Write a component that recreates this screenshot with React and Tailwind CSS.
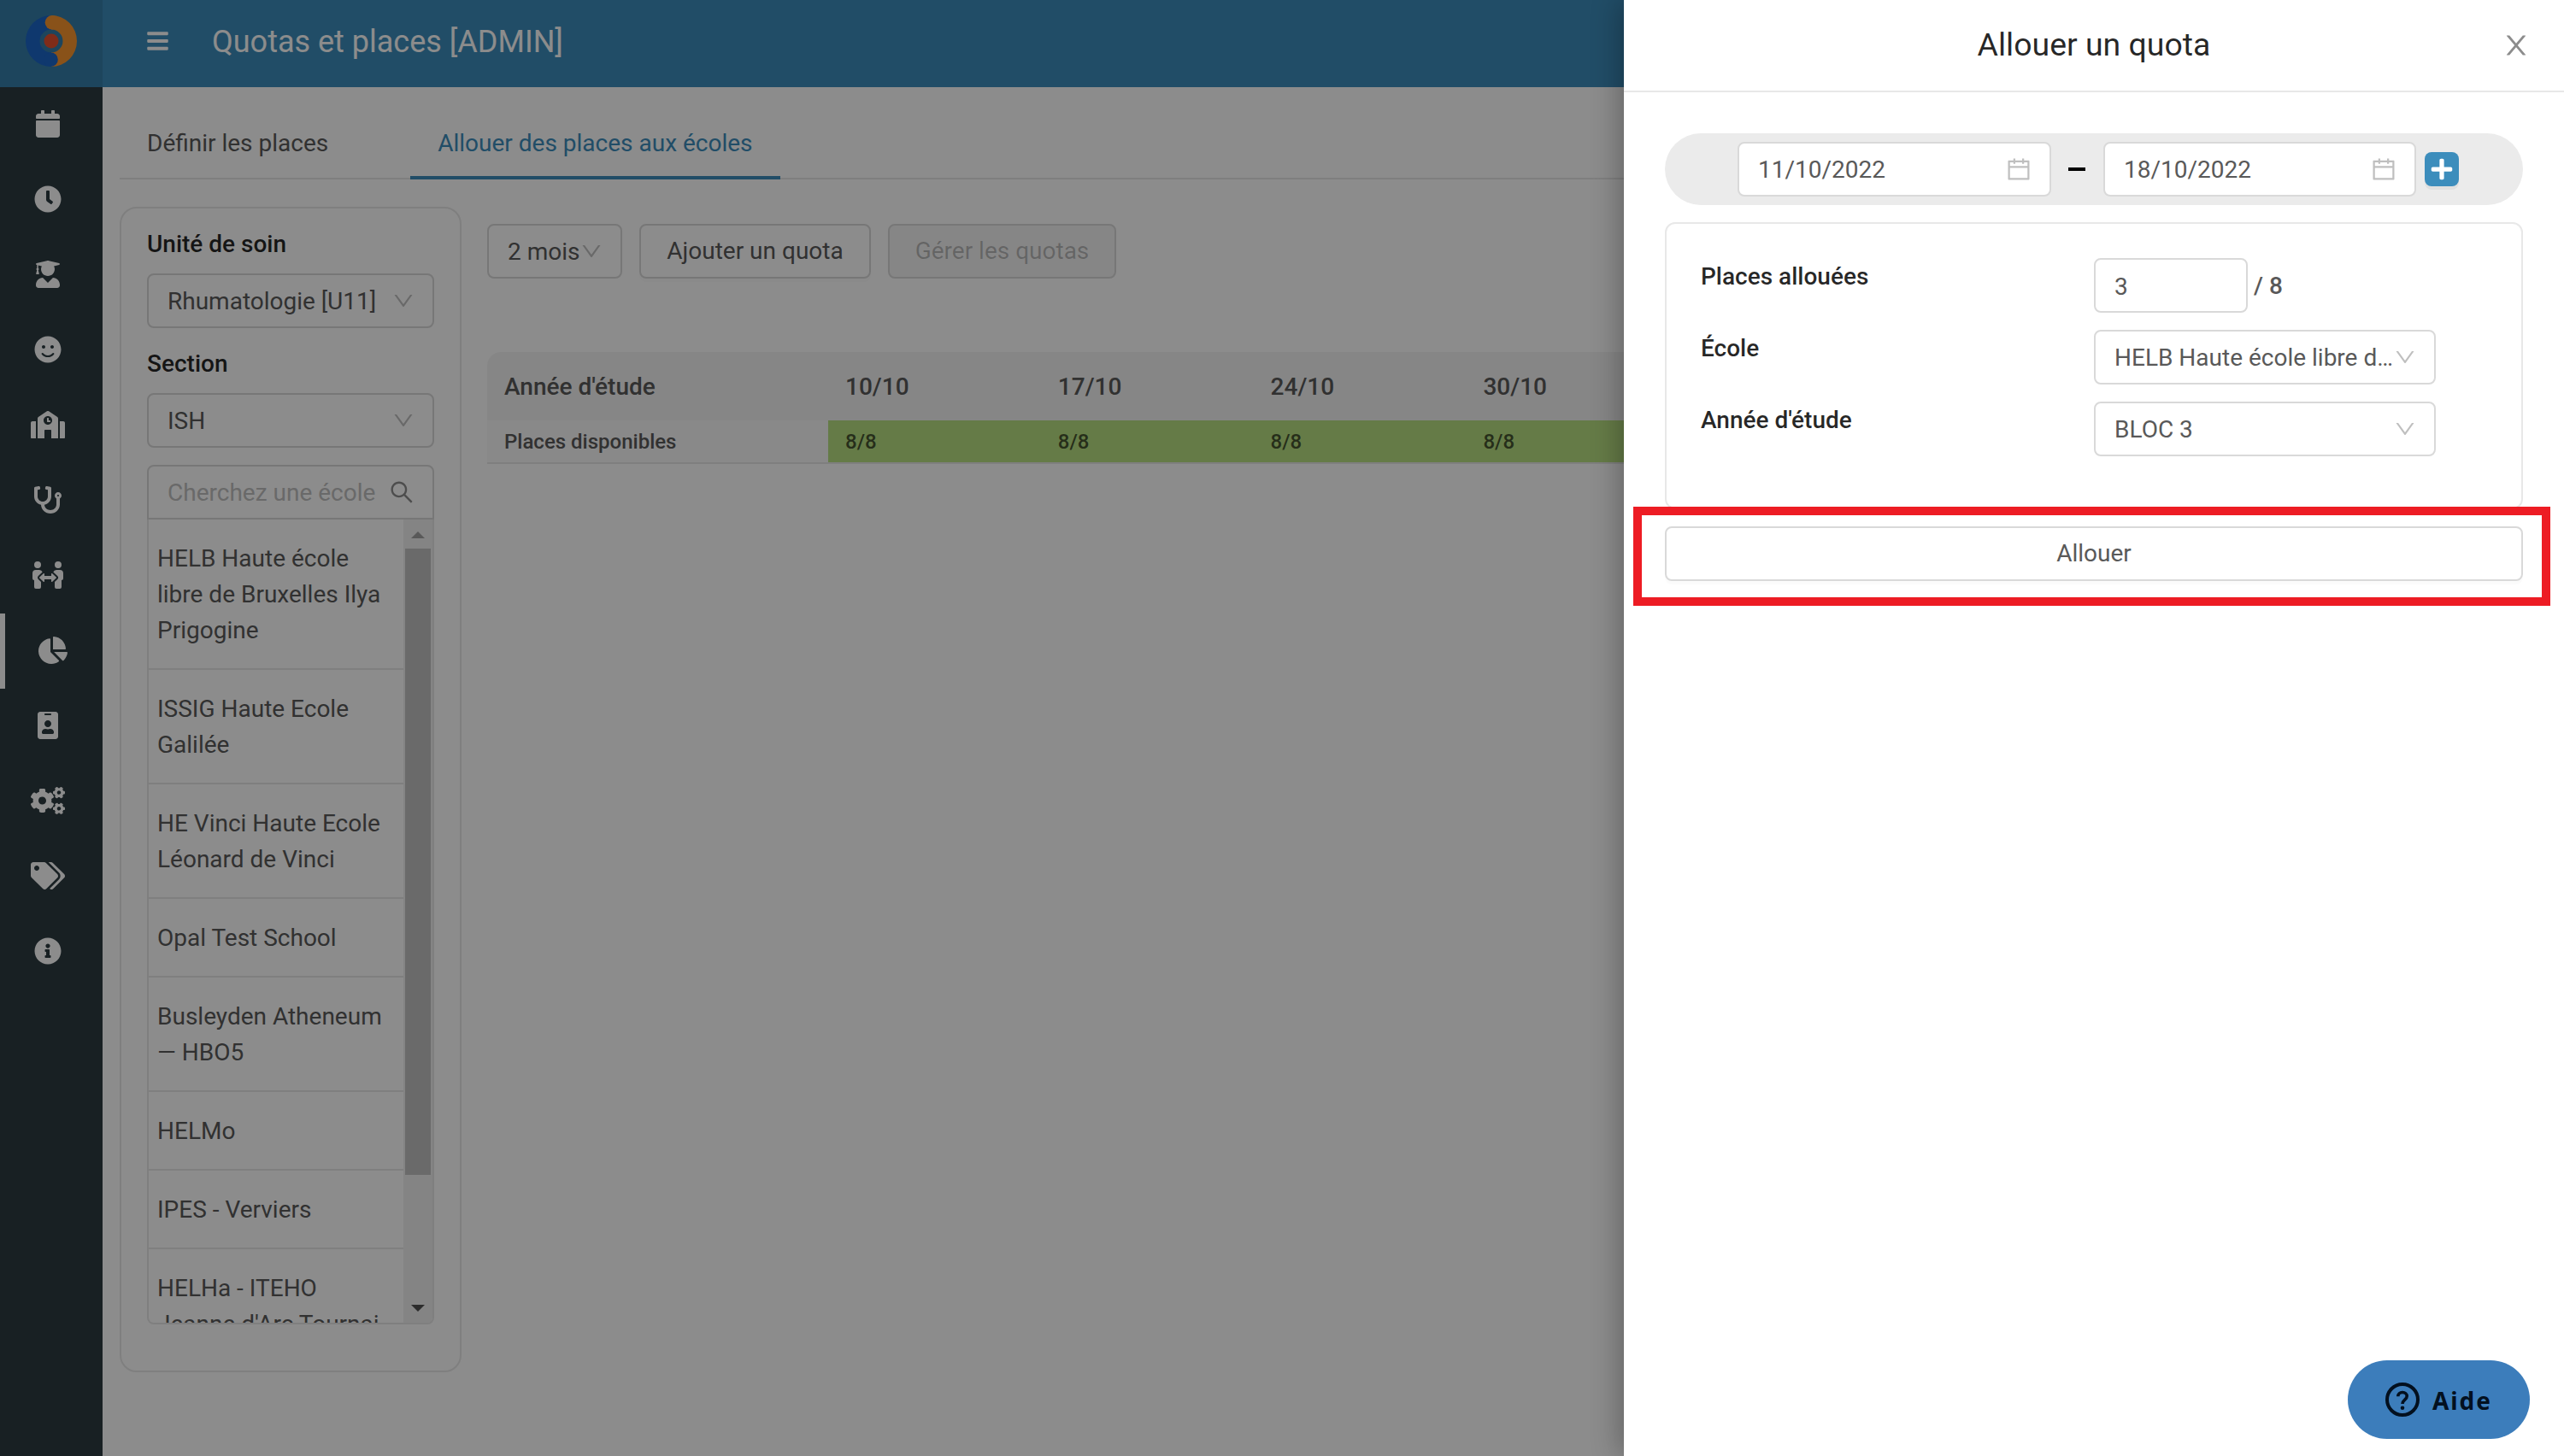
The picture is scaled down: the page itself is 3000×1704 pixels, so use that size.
import React, { useState } from "react";
import {
    FaBars,
    FaCalendar,
    FaClock,
    FaUserGraduate,
    FaSmile,
    FaSchool,
    FaStethoscope,
    FaPeopleArrows,
    FaChartPie,
    FaIdBadge,
    FaCogs,
    FaTags,
    FaInfoCircle,
    FaPlus,
} from "react-icons/fa";
import { AiOutlineDown, AiOutlineSearch, AiOutlineCalendar } from "react-icons/ai";

const menu = [
    { key: "calendar", icon: FaCalendar },
    { key: "hours", icon: FaClock },
    { key: "students", icon: FaUserGraduate },
    { key: "evaluations", icon: FaSmile },
    { key: "schools", icon: FaSchool },
    { key: "units", icon: FaStethoscope },
    { key: "exchanges", icon: FaPeopleArrows },
    { key: "quotas", icon: FaChartPie },
    { key: "badges", icon: FaIdBadge },
    { key: "settings", icon: FaCogs },
    { key: "tags", icon: FaTags },
    { key: "infos", icon: FaInfoCircle },
];

const schools = [
    "HELB Haute école libre de Bruxelles Ilya Prigogine",
    "ISSIG Haute Ecole Galilée",
    "HE Vinci Haute Ecole Léonard de Vinci",
    "Opal Test School",
    "Busleyden Atheneum — HBO5",
    "HELMo",
    "IPES - Verviers",
    "HELHa - ITEHO Jeanne d'Arc Tournai",
];

const weeks = [
    { date: "10/10", places: "8/8" },
    { date: "17/10", places: "8/8" },
    { date: "24/10", places: "8/8" },
    { date: "30/10", places: "8/8" },
];

function Logo() {
    return (
        <svg viewBox="0 0 60 60" className="h-[60px] w-[60px]">
            <path d="M30 0A30 30 0 0 0 30 60V43.5A13.5 13.5 0 0 1 30 16.5Z" fill="#1c66c8" />
            <path d="M30 0A30 30 0 0 1 30 60V43.5A13.5 13.5 0 0 0 30 16.5Z" fill="#f9962f" />
            <circle cx="31" cy="8.3" r="8.3" fill="#f9962f" />
            <circle cx="29.5" cy="51.7" r="8.3" fill="#1c66c8" />
            <circle cx="30" cy="30" r="8.5" fill="#e8502f" />
        </svg>
    );
}

function CloseIcon() {
    return (
        <svg viewBox="0 0 1024 1024" fill="currentColor" className="h-9 w-9">
            <path d="M563.8 512l262.5-312.9c4.4-5.2.7-13.1-6.1-13.1h-79.8c-4.7 0-9.2 2.1-12.3 5.7L511.6 449.8 295.1 191.7c-3-3.6-7.5-5.7-12.3-5.7H203c-6.8 0-10.5 7.9-6.1 13.1L459.4 512 196.9 824.9A7.95 7.95 0 0 0 203 838h79.8c4.7 0 9.2-2.1 12.3-5.7l216.5-258.1 216.5 258.1c3 3.6 7.5 5.7 12.3 5.7h79.8c6.8 0 10.5-7.9 6.1-13.1L563.8 512z" />
        </svg>
    );
}

function Select({ value, className }) {
    return (
        <div className={`flex h-16 items-center rounded-lg border-2 border-[#d9d9d9] bg-white pl-[22px] pr-5 ${className}`}>
            <span className="min-w-0 flex-1 pt-[2px] whitespace-nowrap">{value}</span>
            <AiOutlineDown className="-ml-2 h-7 w-7 shrink-0 text-black/25" />
        </div>
    );
}

function DateInput({ value, className }) {
    return (
        <div className={`flex h-16 items-center justify-between rounded-lg border-2 border-[#d9d9d9] bg-white pl-[22px] pr-5 ${className}`}>
            <span className="pt-[2px]">{value}</span>
            <AiOutlineCalendar className="h-8 w-8 text-black/25" />
        </div>
    );
}

function Sidebar() {
    return (
        <aside className="flex w-[120px] shrink-0 flex-col bg-[#2c3b41]">
            <div className="flex h-[102px] justify-center bg-[#367fa9] pt-[18px]">
                <Logo />
            </div>
            {menu.map(({ key, icon: Icon }) => (
                <div
                    key={key}
                    className={
                        key === "quotas"
                            ? "flex h-[88px] items-center border-l-[6px] border-white pb-[2px] text-white"
                            : "flex h-[88px] items-center pb-[2px] text-white"
                    }
                >
                    <Icon className="ml-9 h-8 w-10" />
                </div>
            ))}
        </aside>
    );
}

function SchoolList() {
    return (
        <div className="flex h-[942px] overflow-hidden rounded-b-lg border-x-2 border-b-2 border-[#e8e8e8]">
            <ul className="flex-1">
                {schools.map(name => (
                    <li key={name} className="border-b-2 border-[#e8e8e8] px-[10px] pt-[25px] pb-[23px] leading-[42px]">
                        {name}
                    </li>
                ))}
            </ul>
            <div className="flex w-[34px] flex-col items-center bg-[#f1f1f1]">
                <svg viewBox="0 0 34 34" className="h-[34px] w-[34px]">
                    <path d="M9 22l8-8 8 8z" fill="#a3a3a3" />
                </svg>
                <div className="h-[733px] w-[30px] bg-[#c1c1c1]" />
                <svg viewBox="0 0 34 34" className="mt-auto h-[34px] w-[34px]">
                    <path d="M9 13l8 8 8-8z" fill="#505050" />
                </svg>
            </div>
        </div>
    );
}

function Filters() {
    return (
        <section className="h-[1364px] w-[400px] shrink-0 rounded-[20px] border-2 border-[#e8e8e8] px-[30px] pt-5">
            <h3 className="mb-3 leading-[44px] font-medium text-black/85">Unité de soin</h3>
            <Select value="Rhumatologie [U11]" className="mb-5" />
            <h3 className="mb-3 leading-[44px] font-medium text-black/85">Section</h3>
            <Select value="ISH" className="mb-5" />
            <div className="flex h-16 items-center justify-between rounded-t-lg border-2 border-[#d9d9d9] pl-[22px] pr-5">
                <span className="pt-[2px] text-[#bfbfbf]">Cherchez une école</span>
                <AiOutlineSearch className="h-8 w-8 text-black/45" />
            </div>
            <SchoolList />
        </section>
    );
}

function QuotaTable() {
    return (
        <div className="mt-[86px] w-[2390px] overflow-hidden rounded-t-2xl border-b-2 border-[#e8e8e8] font-medium">
            <div className="flex h-20 items-center bg-[#f5f5f5] pt-[2px]">
                <div className="w-[399px] pl-5">Année d'étude</div>
                {weeks.map(w => (
                    <div key={w.date} className="w-[248.8px] pl-5">{w.date}</div>
                ))}
            </div>
            <div className="flex h-[49px] text-[24px] leading-[51px]">
                <div className="w-[399px] bg-[#f9f9f9] pl-5">Places disponibles</div>
                <div className="flex flex-1 bg-[#b8e081]">
                    {weeks.map(w => (
                        <div key={w.date} className="w-[248.8px] pl-5 text-black/65">{w.places}</div>
                    ))}
                </div>
            </div>
        </div>
    );
}

function QuotaDrawer() {
    const [places, setPlaces] = useState("3");

    return (
        <div className="absolute inset-y-0 right-0 w-[1100px] bg-white shadow-[-4px_0_32px_rgba(0,0,0,0.3)]">
            <div className="flex h-[108px] items-center border-b-2 border-[#e8e8e8] pl-[100px]">
                <h2 className="flex-1 pb-[2px] text-center text-[37.44px] leading-[56px] text-black/85">Allouer un quota</h2>
                <button className="flex w-[100px] justify-start pl-[26px] text-black/45">
                    <CloseIcon />
                </button>
            </div>

            <div className="px-12 pt-12">
                <div className="flex h-[84px] items-center rounded-full bg-[#ebebeb] pl-[85px]">
                    <DateInput value="11/10/2022" className="w-[367px]" />
                    <span className="mr-[21px] ml-5 h-1 w-5 bg-black" />
                    <DateInput value="18/10/2022" className="w-[366px]" />
                    <button className="ml-[10px] flex h-10 w-10 items-center justify-center rounded-lg bg-[#3c8dbc] text-white shadow-[0_4px_0_rgba(0,0,0,0.045)]">
                        <FaPlus className="h-7 w-7" />
                    </button>
                </div>

                <form className="mt-5 h-[336px] rounded-xl border-2 border-[#e8e8e8] pl-10 pt-10">
                    <div className="mb-5 flex h-16">
                        <label className="w-[460px] leading-[44px] font-medium text-black/85">Places allouées</label>
                        <input
                            className="h-16 w-[180px] rounded-lg border-2 border-[#d9d9d9] px-[22px] pt-[2px]"
                            value={places}
                            onChange={e => setPlaces(e.target.value)}
                        />
                        <span className="pl-[7px] leading-[66px] font-medium">/ 8</span>
                    </div>
                    <div className="mb-5 flex h-16">
                        <label className="w-[460px] leading-[44px] font-medium text-black/85">École</label>
                        <Select value="HELB Haute école libre d…" className="w-[400px]" />
                    </div>
                    <div className="flex h-16">
                        <label className="w-[460px] leading-[44px] font-medium text-black/85">Année d'étude</label>
                        <Select value="BLOC 3" className="w-[400px]" />
                    </div>
                </form>

                <div className="relative mt-5">
                    <button className="h-16 w-full rounded-lg border-2 border-[#d9d9d9] shadow-[0_4px_0_rgba(0,0,0,0.015)]">
                        Allouer
                    </button>
                    <div className="absolute -top-[23px] -left-[37px] h-[116px] w-[1073px] border-[10px] border-[#ed1c24]" />
                </div>
            </div>
        </div>
    );
}

function HelpButton() {
    return (
        <button className="absolute right-10 bottom-5 flex h-[92px] w-[213px] items-center rounded-full bg-[#3c7dbb] pl-[44px] text-[#03101f]">
            <svg viewBox="0 0 40 40" fill="none" stroke="currentColor" className="h-10 w-10">
                <circle cx="20" cy="20" r="18" strokeWidth="4" />
                <path d="M14.8 16.3c0-2.9 2.2-4.8 5.2-4.8s5.2 1.9 5.2 4.6c0 4-5.2 4.2-5.2 8.9" strokeWidth="3.6" />
                <circle cx="20" cy="29.8" r="2.3" fill="currentColor" stroke="none" />
            </svg>
            <span className="ml-[15px] pt-[2px] font-['Noto_Sans',sans-serif] text-[28px] font-bold tracking-[1.9px]">Aide</span>
        </button>
    );
}

export default function App() {
    return (
        <div className="relative flex h-[1704px] w-[3000px] overflow-hidden bg-white font-['Roboto',sans-serif] text-[28px] text-[#595959]">
            <Sidebar />

            <div className="flex-1">
                <header className="flex h-[102px] items-center bg-[#3c8dbc] pb-[6px] pl-[52px] text-white">
                    <FaBars className="h-7 w-[25px]" />
                    <h1 className="ml-[51px] pt-[2px] text-[36px]">Quotas et places [ADMIN]</h1>
                </header>

                <main className="pl-5">
                    <nav className="flex h-[108px] w-[2820px] gap-16 border-b-2 border-[#e8e8e8] leading-[42px]">
                        <div className="px-8 pt-[45px]">Définir les places</div>
                        <div className="h-[108px] border-b-4 border-[#3c8dbc] px-8 pt-[45px] text-[#3c8dbc]">
                            Allouer des places aux écoles
                        </div>
                    </nav>

                    <div className="mt-8 flex gap-[30px]">
                        <Filters />
                        <section className="pt-5">
                            <div className="flex gap-5">
                                <Select value="2 mois" className="w-[158px]" />
                                <button className="h-16 w-[271px] rounded-lg border-2 border-[#d9d9d9] shadow-[0_4px_0_rgba(0,0,0,0.015)]">
                                    Ajouter un quota
                                </button>
                                <button className="h-16 w-[267px] rounded-lg border-2 border-[#d9d9d9] bg-[#f5f5f5] text-black/25">
                                    Gérer les quotas
                                </button>
                            </div>
                            <QuotaTable />
                        </section>
                    </div>
                </main>
            </div>

            <div className="absolute inset-0 bg-black/45" />
            <QuotaDrawer />
            <HelpButton />
        </div>
    );
}
